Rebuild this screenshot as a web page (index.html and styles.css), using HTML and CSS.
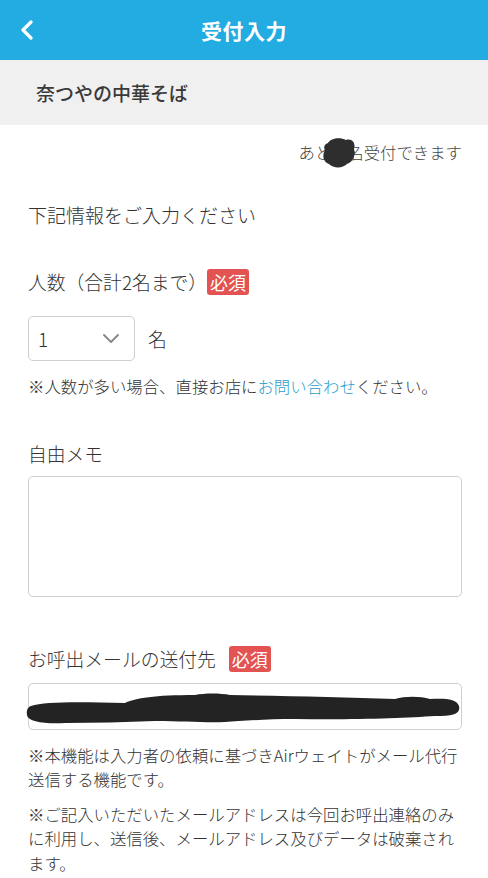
FILE: index.html
```html
<!DOCTYPE html>
<html lang="ja">
<head>
<meta charset="utf-8">
<title>受付入力</title>
<link rel="stylesheet" href="styles.css">
</head>
<body>
<header class="appbar">
  <span class="back">
    <svg width="14" height="20" viewBox="0 0 14 20"><path d="M11 2 L3 10 L11 18" fill="none" stroke="#fff" stroke-width="3.2" stroke-linecap="round" stroke-linejoin="round"/></svg>
  </span>
  <h1 class="title">受付入力</h1>
</header>
<div class="shopbar">奈つやの中華そば</div>
<main class="content">
  <p class="remain">あと<span class="num">2<svg class="blot" width="34" height="32" viewBox="0 0 34 32"><path d="M6 6 C9 1 18 0 24 3 C30 1 34 6 32 12 C34 18 31 25 25 27 C20 32 11 31 7 27 C1 25 0 18 3 13 C1 10 3 7 6 6 Z" fill="#2e2e2e"/></svg></span>名受付できます</p>
  <p class="intro">下記情報をご入力ください</p>

  <div class="label">人数（合計2名まで）<span class="badge badge-tight">必須</span></div>
  <div class="count-row">
    <div class="select">
      <span class="select-value">1</span>
      <svg width="18" height="12" viewBox="0 0 18 12"><path d="M2 2 L9 9 L16 2" fill="none" stroke="#8a8a8a" stroke-width="2" stroke-linecap="round" stroke-linejoin="round"/></svg>
    </div>
    <span class="unit">名</span>
  </div>
  <p class="note note-count">※人数が多い場合、直接お店に<a class="link" href="#">お問い合わせ</a>ください。</p>

  <div class="label label-memo">自由メモ</div>
  <textarea class="memo"></textarea>

  <div class="label label-mail">お呼出メールの送付先<span class="badge">必須</span></div>
  <div class="mail">
    <svg class="scribble" width="440" height="44" viewBox="0 0 440 44"><path d="M6 20 C20 15 60 16 100 17 C110 12 130 9 170 9 C180 7 195 7 205 9 C260 10 320 11 370 13 C380 10 395 10 405 13 C420 12 432 13 434 20 C436 28 428 30 410 30 C380 32 330 34 270 33 C240 33 215 35 200 36 C180 37 160 35 130 35 C100 36 70 37 40 37 C20 38 3 36 2 29 C1 24 3 21 6 20 Z" fill="#232323"/></svg>
  </div>
  <p class="note note-a">※本機能は入力者の依頼に基づきAirウェイトがメール代行送信する機能です。</p>
  <p class="note note-b">※ご記入いただいたメールアドレスは今回お呼出連絡のみに利用し、送信後、メールアドレス及びデータは破棄されます。</p>
</main>
</body>
</html>
```
FILE: styles.css
```css
* { box-sizing: border-box; }
html, body { margin: 0; padding: 0; background: #fff; }
body {
  font-family: "Noto Sans CJK JP", "Noto Sans", sans-serif;
  font-weight: 300;
  color: #333;
}
p { margin: 0; }

.appbar {
  height: 60px;
  background: #22ace1;
  display: flex;
  align-items: center;
  justify-content: center;
  position: relative;
}
.back {
  position: absolute;
  left: 20px;
  top: 20px;
  display: flex;
}
.title {
  margin: 0;
  color: #fff;
  font-size: 21px;
  font-weight: 700;
  line-height: 1;
  letter-spacing: 0.5px;
}

.shopbar {
  height: 65px;
  background: #f0f0f0;
  display: flex;
  align-items: center;
  padding-left: 36px;
  font-size: 19px;
  font-weight: 500;
  color: #3a3a3a;
}

.content {
  padding: 0 26px 0 28px;
}

.remain {
  margin-top: 15px;
  text-align: right;
  font-size: 16.4px;
  line-height: 24px;
  color: #444;
}
.num {
  display: inline-block;
  width: 16px;
  position: relative;
  color: transparent;
}
.blot {
  position: absolute;
  left: -9px;
  top: -3px;
}

.intro {
  margin-top: 37px;
  font-size: 19px;
  line-height: 28px;
}

.label {
  margin-top: 39px;
  font-size: 18.8px;
  line-height: 28px;
  display: flex;
  align-items: center;
}
.badge {
  display: inline-block;
  margin-left: 13px;
  background: #e25352;
  color: #fff;
  font-weight: 400;
  font-size: 18px;
  line-height: 26px;
  padding: 0 3px;
  border-radius: 3px;
}
.badge-tight { margin-left: 0; }

.count-row {
  margin-top: 20px;
  display: flex;
  align-items: center;
}
.select {
  width: 107px;
  height: 45px;
  border: 1px solid #cfcfcf;
  border-radius: 5px;
  display: flex;
  align-items: center;
  justify-content: space-between;
  padding: 0 14px 0 9px;
}
.select-value {
  font-size: 19px;
  color: #333;
}
.unit {
  margin-left: 13px;
  font-size: 18.8px;
}

.note {
  font-size: 16.4px;
  line-height: 24.5px;
  color: #333;
}
.note-count { margin-top: 13px; }
.link { color: #2c9ecb; text-decoration: none; }

.label-memo { margin-top: 41px; }
.memo {
  display: block;
  margin-top: 8px;
  width: 434px;
  height: 121px;
  border: 1px solid #cfcfcf;
  border-radius: 5px;
  resize: none;
  outline: none;
}

.label-mail { margin-top: 48px; }
.mail {
  margin-top: 10px;
  height: 47px;
  border: 1px solid #cfcfcf;
  border-radius: 5px;
  position: relative;
}
.scribble {
  position: absolute;
  left: -4px;
  top: 2px;
}

.note-a { margin-top: 13px; }
.note-b { margin-top: 10px; }
```
